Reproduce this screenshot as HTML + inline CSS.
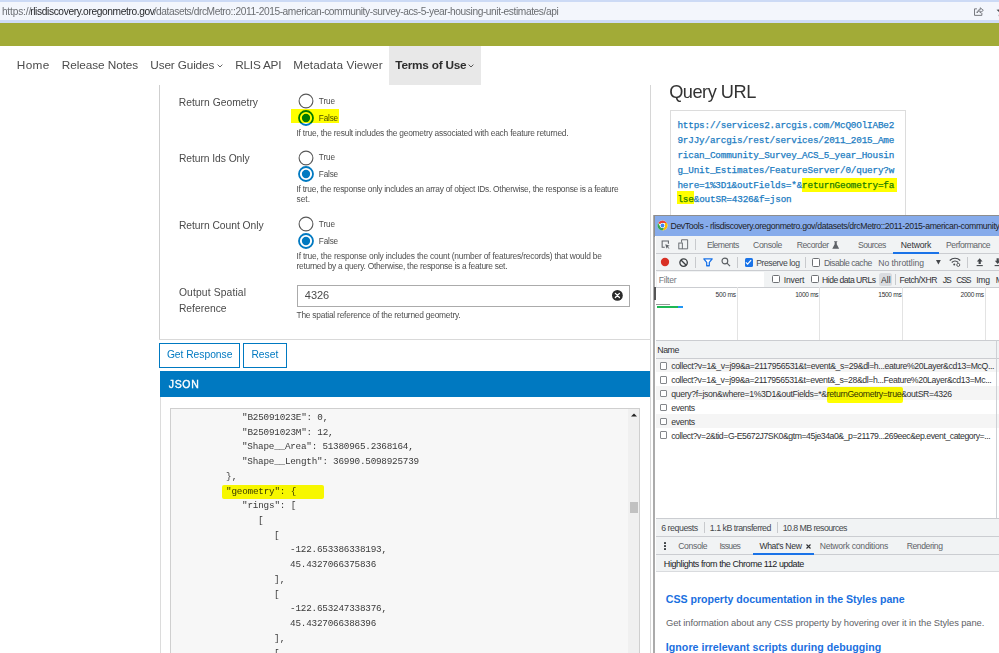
<!DOCTYPE html><html lang="en"><head><meta charset="utf-8"><title>RLIS Discovery API</title><style>

html,body{margin:0;padding:0;background:#fff;}
body{width:999px;height:653px;overflow:hidden;position:relative;font-family:"Liberation Sans",sans-serif;}
#root{position:absolute;left:0;top:0;width:999px;height:653px;overflow:hidden;}
#root div{position:absolute;box-sizing:border-box;}
#root svg{position:absolute;overflow:visible;}
.t{position:absolute;white-space:pre;line-height:1;}

</style></head><body><div id="root">
<div style="left:0px;top:0px;width:999px;height:23px;background:#f3f6fc;"></div>
<div style="left:0px;top:0px;width:999px;height:2px;background:#ccdaf5;"></div>
<div style="left:0px;top:20px;width:999px;height:3px;background:#cfdcf6;"></div>
<span class="t" style="left:1.89px;top:7.00px;font-size:10.2px;color:#6b6e72;letter-spacing:-0.169px;">https://</span>
<span class="t" style="left:30.19px;top:7.00px;font-size:10.2px;color:#26282b;letter-spacing:-0.370px;">rlisdiscovery.oregonmetro.gov</span>
<span class="t" style="left:153.69px;top:7.00px;font-size:10.2px;color:#6b6e72;letter-spacing:-0.415px;">/datasets/drcMetro::2011-2015-american-community-survey-acs-5-year-housing-unit-estimates/api</span>
<svg style="left:973.2px;top:5.8px" width="12" height="10.6" viewBox="0 0 14 13"><path d="M4.5 3.5H1.5V11.5H10.5V8.5" fill="none" stroke="#62656a" stroke-width="1.05"/><path d="M4.5 8.5C4.8 5.8 6.3 4.6 8.5 4.5V2.2L12.3 5.3L8.5 8.4V6.2C6.8 6.2 5.5 6.9 4.5 8.5Z" fill="none" stroke="#62656a" stroke-width="1.05" stroke-linejoin="round"/></svg>
<svg style="left:996px;top:5px" width="12" height="12" viewBox="0 0 12 12"><path d="M6 0.8L7.6 4.4L11.5 4.8L8.6 7.4L9.4 11.2L6 9.2L2.6 11.2L3.4 7.4L0.5 4.8L4.4 4.4Z" fill="#4a4d51"/></svg>
<div style="left:0px;top:23px;width:999px;height:22.7px;background:#a2ab37;"></div>
<div style="left:389px;top:46px;width:92px;height:38.7px;background:#e8e8e8;"></div>
<span class="t" style="left:16.79px;top:60.00px;font-size:11.8px;color:#4c4c4c;letter-spacing:0.362px;">Home</span>
<span class="t" style="left:61.79px;top:60.00px;font-size:11.8px;color:#4c4c4c;letter-spacing:-0.075px;">Release Notes</span>
<span class="t" style="left:150.29px;top:60.00px;font-size:11.8px;color:#4c4c4c;letter-spacing:-0.151px;">User Guides</span>
<span class="t" style="left:235.29px;top:60.00px;font-size:11.8px;color:#4c4c4c;letter-spacing:-0.245px;">RLIS API</span>
<span class="t" style="left:293.29px;top:60.00px;font-size:11.8px;color:#4c4c4c;letter-spacing:0.074px;">Metadata Viewer</span>
<span class="t" style="left:395.29px;top:60.00px;font-size:11.8px;color:#2e2e2e;font-weight:700;letter-spacing:-0.230px;">Terms of Use</span>
<svg style="left:216.5px;top:63.5px" width="6" height="4" viewBox="0 0 6 4"><path d="M0.6 0.6L3 3L5.4 0.6" fill="none" stroke="#555" stroke-width="0.9"/></svg>
<svg style="left:468px;top:63.5px" width="6" height="4" viewBox="0 0 6 4"><path d="M0.6 0.6L3 3L5.4 0.6" fill="none" stroke="#444" stroke-width="0.9"/></svg>
<div style="left:159px;top:85px;width:1px;height:255px;background:#cfcfcf;"></div>
<div style="left:650px;top:85px;width:1px;height:568px;background:#d6d6d6;"></div>
<div style="left:159px;top:339px;width:492px;height:1px;background:#d9d9d9;"></div>
<span class="t" style="left:178.78px;top:98.00px;font-size:10.3px;color:#4a4a4a;letter-spacing:0.017px;">Return Geometry</span>
<span class="t" style="left:178.88px;top:154.00px;font-size:10.3px;color:#4a4a4a;letter-spacing:-0.054px;">Return Ids Only</span>
<span class="t" style="left:178.88px;top:221.00px;font-size:10.3px;color:#4a4a4a;letter-spacing:-0.032px;">Return Count Only</span>
<span class="t" style="left:178.88px;top:288.00px;font-size:10.3px;color:#4a4a4a;letter-spacing:0.141px;">Output Spatial</span>
<span class="t" style="left:178.88px;top:304.00px;font-size:10.3px;color:#4a4a4a;letter-spacing:0.024px;">Reference</span>
<svg style="left:295.7px;top:91.2px" width="20" height="20" viewBox="0 0 20 20"><circle cx="10" cy="10" r="6.9" fill="#fff" stroke="#595959" stroke-width="1.1"/></svg>
<span class="t" style="left:318.81px;top:98.00px;font-size:8.2px;color:#4a4a4a;letter-spacing:-0.087px;">True</span>
<svg style="left:296px;top:108.10000000000001px" width="20" height="20" viewBox="0 0 20 20"><circle cx="10" cy="10" r="7.0" fill="#fff" stroke="#0079c1" stroke-width="1.8"/><circle cx="10" cy="10" r="4.15" fill="#0079c1"/></svg>
<span class="t" style="left:318.81px;top:115.00px;font-size:8.2px;color:#4a4a4a;letter-spacing:-0.169px;">False</span>
<svg style="left:295.7px;top:147.5px" width="20" height="20" viewBox="0 0 20 20"><circle cx="10" cy="10" r="6.9" fill="#fff" stroke="#595959" stroke-width="1.1"/></svg>
<span class="t" style="left:318.81px;top:154.00px;font-size:8.2px;color:#4a4a4a;letter-spacing:-0.087px;">True</span>
<svg style="left:296px;top:164.3px" width="20" height="20" viewBox="0 0 20 20"><circle cx="10" cy="10" r="7.0" fill="#fff" stroke="#0079c1" stroke-width="1.8"/><circle cx="10" cy="10" r="4.15" fill="#0079c1"/></svg>
<span class="t" style="left:318.81px;top:171.00px;font-size:8.2px;color:#4a4a4a;letter-spacing:-0.169px;">False</span>
<svg style="left:295.7px;top:214.3px" width="20" height="20" viewBox="0 0 20 20"><circle cx="10" cy="10" r="6.9" fill="#fff" stroke="#595959" stroke-width="1.1"/></svg>
<span class="t" style="left:318.81px;top:221.00px;font-size:8.2px;color:#4a4a4a;letter-spacing:-0.087px;">True</span>
<svg style="left:296px;top:231.20000000000002px" width="20" height="20" viewBox="0 0 20 20"><circle cx="10" cy="10" r="7.0" fill="#fff" stroke="#0079c1" stroke-width="1.8"/><circle cx="10" cy="10" r="4.15" fill="#0079c1"/></svg>
<span class="t" style="left:318.81px;top:238.00px;font-size:8.2px;color:#4a4a4a;letter-spacing:-0.169px;">False</span>
<div style="left:291px;top:109.2px;width:48.2px;height:13.6px;background:#ffff00;mix-blend-mode:multiply;"></div>
<span class="t" style="left:296.50px;top:129.00px;font-size:8.4px;color:#4f4f4f;letter-spacing:-0.215px;">If true, the result includes the geometry associated with each feature returned.</span>
<span class="t" style="left:296.50px;top:185.00px;font-size:8.4px;color:#4f4f4f;letter-spacing:-0.254px;">If true, the response only includes an array of object IDs. Otherwise, the response is a feature</span>
<span class="t" style="left:296.50px;top:195.00px;font-size:8.4px;color:#4f4f4f;letter-spacing:0.002px;">set.</span>
<span class="t" style="left:296.50px;top:252.00px;font-size:8.4px;color:#4f4f4f;letter-spacing:-0.198px;">If true, the response only includes the count (number of features/records) that would be</span>
<span class="t" style="left:296.50px;top:262.00px;font-size:8.4px;color:#4f4f4f;letter-spacing:-0.263px;">returned by a query. Otherwise, the response is a feature set.</span>
<span class="t" style="left:296.50px;top:311.00px;font-size:8.4px;color:#4f4f4f;letter-spacing:-0.224px;">The spatial reference of the returned geometry.</span>
<div style="left:296.5px;top:285px;width:333.5px;height:21.8px;background:#fff;border:1px solid #ababab;"></div>
<span class="t" style="left:304.84px;top:290.00px;font-size:11px;color:#4a4a4a;letter-spacing:-0.041px;">4326</span>
<svg style="left:612.3px;top:290px" width="10.8" height="10.8" viewBox="0 0 10 10"><circle cx="5" cy="5" r="5" fill="#2b2b2b"/><path d="M3.1 3.1L6.9 6.9M6.9 3.1L3.1 6.9" stroke="#fff" stroke-width="1.2" stroke-linecap="round"/></svg>
<div style="left:159.3px;top:342.5px;width:81px;height:25px;background:#fff;border:1px solid #0079c1;"></div>
<div style="left:243px;top:342.5px;width:43.8px;height:25px;background:#fff;border:1px solid #0079c1;"></div>
<span class="t" style="left:166.88px;top:350.00px;font-size:10.3px;color:#0079c1;letter-spacing:-0.029px;">Get Response</span>
<span class="t" style="left:251.38px;top:350.00px;font-size:10.3px;color:#0079c1;letter-spacing:0.016px;">Reset</span>
<div style="left:160px;top:371.2px;width:490px;height:26px;background:#0079c1;"></div>
<span class="t" style="left:168.87px;top:379.00px;font-size:10.5px;color:#fff;letter-spacing:0.624px;-webkit-text-stroke:0.35px #fff;">JSON</span>
<div style="left:160px;top:397px;width:1px;height:256px;background:#dcdcdc;"></div>
<div style="left:170px;top:408.2px;width:470px;height:250px;background:#f7f7f7;border:1px solid #cfcfcf;"></div>
<div style="left:628px;top:409.2px;width:11px;height:245px;background:#f0f0f0;"></div>
<div style="left:629.5px;top:502px;width:8.5px;height:10.8px;background:#c1c1c1;"></div>
<svg style="left:630.7px;top:412.5px" width="6" height="4" viewBox="0 0 6 4"><path d="M0 3.6L3 0.4L6 3.6Z" fill="#222"/></svg>
<span class="t" style="left:242.02px;top:413.00px;font-size:9.3px;color:#3a3a3a;font-family:'Liberation Mono', monospace;letter-spacing:-0.201px;">&quot;B25091023E&quot;: 0,</span>
<span class="t" style="left:242.02px;top:428.00px;font-size:9.3px;color:#3a3a3a;font-family:'Liberation Mono', monospace;letter-spacing:-0.203px;">&quot;B25091023M&quot;: 12,</span>
<span class="t" style="left:242.02px;top:442.00px;font-size:9.3px;color:#3a3a3a;font-family:'Liberation Mono', monospace;letter-spacing:-0.220px;">&quot;Shape__Area&quot;: 51380965.2368164,</span>
<span class="t" style="left:242.02px;top:457.00px;font-size:9.3px;color:#3a3a3a;font-family:'Liberation Mono', monospace;letter-spacing:-0.220px;">&quot;Shape__Length&quot;: 36990.5098925739</span>
<span class="t" style="left:226.00px;top:472.00px;font-size:9.3px;color:#3a3a3a;font-family:'Liberation Mono', monospace;letter-spacing:0.062px;">},</span>
<span class="t" style="left:226.00px;top:487.00px;font-size:9.3px;color:#3a3a3a;font-family:'Liberation Mono', monospace;letter-spacing:-0.192px;">&quot;geometry&quot;: {</span>
<span class="t" style="left:242.02px;top:501.00px;font-size:9.3px;color:#3a3a3a;font-family:'Liberation Mono', monospace;letter-spacing:-0.178px;">&quot;rings&quot;: [</span>
<span class="t" style="left:258.04px;top:516.00px;font-size:9.3px;color:#3a3a3a;font-family:'Liberation Mono', monospace;letter-spacing:0.362px;">[</span>
<span class="t" style="left:274.06px;top:531.00px;font-size:9.3px;color:#3a3a3a;font-family:'Liberation Mono', monospace;letter-spacing:0.362px;">[</span>
<span class="t" style="left:290.08px;top:545.00px;font-size:9.3px;color:#3a3a3a;font-family:'Liberation Mono', monospace;letter-spacing:-0.206px;">-122.653386338193,</span>
<span class="t" style="left:290.08px;top:560.00px;font-size:9.3px;color:#3a3a3a;font-family:'Liberation Mono', monospace;letter-spacing:-0.201px;">45.4327066375836</span>
<span class="t" style="left:274.06px;top:575.00px;font-size:9.3px;color:#3a3a3a;font-family:'Liberation Mono', monospace;letter-spacing:0.062px;">],</span>
<span class="t" style="left:274.06px;top:590.00px;font-size:9.3px;color:#3a3a3a;font-family:'Liberation Mono', monospace;letter-spacing:0.362px;">[</span>
<span class="t" style="left:290.08px;top:604.00px;font-size:9.3px;color:#3a3a3a;font-family:'Liberation Mono', monospace;letter-spacing:-0.206px;">-122.653247338376,</span>
<span class="t" style="left:290.08px;top:619.00px;font-size:9.3px;color:#3a3a3a;font-family:'Liberation Mono', monospace;letter-spacing:-0.201px;">45.4327066388396</span>
<span class="t" style="left:274.06px;top:634.00px;font-size:9.3px;color:#3a3a3a;font-family:'Liberation Mono', monospace;letter-spacing:0.062px;">],</span>
<span class="t" style="left:274.06px;top:649.00px;font-size:9.3px;color:#3a3a3a;font-family:'Liberation Mono', monospace;letter-spacing:0.362px;">[</span>
<div style="left:221.8px;top:484.8px;width:102.3px;height:14.2px;background:#ffff00;border-radius:2px;mix-blend-mode:multiply;"></div>
<span class="t" style="left:669.21px;top:83.00px;font-size:18.2px;color:#333;letter-spacing:-0.487px;">Query URL</span>
<div style="left:670px;top:109.6px;width:236.3px;height:120px;background:#fff;border:1px solid #dcdcdc;"></div>
<span class="t" style="left:677.44px;top:121.00px;font-size:9.3px;color:#1b7cc2;font-family:'Liberation Mono', monospace;letter-spacing:-0.161px;-webkit-text-stroke:0.25px #1b7cc2;">https://services2.arcgis.com/McQ0OlIABe2</span>
<span class="t" style="left:677.44px;top:136.00px;font-size:9.3px;color:#1b7cc2;font-family:'Liberation Mono', monospace;letter-spacing:-0.161px;-webkit-text-stroke:0.25px #1b7cc2;">9rJJy/arcgis/rest/services/2011_2015_Ame</span>
<span class="t" style="left:677.44px;top:151.00px;font-size:9.3px;color:#1b7cc2;font-family:'Liberation Mono', monospace;letter-spacing:-0.161px;-webkit-text-stroke:0.25px #1b7cc2;">rican_Community_Survey_ACS_5_year_Housin</span>
<span class="t" style="left:677.44px;top:166.00px;font-size:9.3px;color:#1b7cc2;font-family:'Liberation Mono', monospace;letter-spacing:-0.161px;-webkit-text-stroke:0.25px #1b7cc2;">g_Unit_Estimates/FeatureServer/0/query?w</span>
<span class="t" style="left:677.44px;top:181.00px;font-size:9.3px;color:#1b7cc2;font-family:'Liberation Mono', monospace;letter-spacing:-0.161px;-webkit-text-stroke:0.25px #1b7cc2;">here=1%3D1&amp;outFields=*&amp;returnGeometry=fa</span>
<span class="t" style="left:677.44px;top:195.00px;font-size:9.3px;color:#1b7cc2;font-family:'Liberation Mono', monospace;letter-spacing:-0.146px;-webkit-text-stroke:0.25px #1b7cc2;">lse&amp;outSR=4326&amp;f=json</span>
<div style="left:801.5px;top:177.8px;width:95.5px;height:14.2px;background:#ffff00;mix-blend-mode:multiply;"></div>
<div style="left:676.6px;top:191.3px;width:17.6px;height:12.5px;background:#ffff00;mix-blend-mode:multiply;"></div>
<div style="left:653.1px;top:214.6px;width:350px;height:442px;background:#ababab;"></div>
<div style="left:653.6px;top:214.8px;width:350px;height:22px;background:#8e8e8e;"></div>
<div style="left:655px;top:216px;width:345px;height:440px;background:#fff;"></div>
<div style="left:655px;top:215.6px;width:345px;height:20px;background:#86abeb;"></div>
<span class="t" style="left:670.48px;top:222.00px;font-size:8.7px;color:#1d1d1f;letter-spacing:-0.351px;">DevTools - rlisdiscovery.oregonmetro.gov/datasets/drcMetro::2011-2015-american-community-</span>
<svg style="left:656.8px;top:219.8px" width="11" height="11" viewBox="0 0 48 48"><circle cx="24" cy="24" r="22" fill="#fff"/><path d="M24 2A22 22 0 0 1 43.05 13H24A11 11 0 0 0 14.47 18.5L4.95 13A22 22 0 0 1 24 2Z" fill="#ea4335"/><path d="M43.05 13A22 22 0 0 1 24 46L33.53 29.5A11 11 0 0 0 33.53 18.5L33.53 13Z" fill="#fbbc04"/><path d="M24 46A22 22 0 0 1 4.95 13L14.47 29.5A11 11 0 0 0 33.53 29.5Z" fill="#34a853"/><circle cx="24" cy="24" r="10.5" fill="#fff"/><circle cx="24" cy="24" r="8.2" fill="#4285f4"/></svg>
<div style="left:655.8px;top:235.6px;width:345px;height:18.2px;background:#f1f3f4;border-bottom:1px solid #cbcdd1;"></div>
<div style="left:655.8px;top:253.8px;width:345px;height:17.2px;background:#f1f3f4;border-bottom:1px solid #cbcdd1;"></div>
<div style="left:655.8px;top:271px;width:345px;height:17px;background:#f1f3f4;border-bottom:1px solid #cbcdd1;"></div>
<span class="t" style="left:706.98px;top:241.00px;font-size:8.6px;color:#5f6368;letter-spacing:-0.512px;">Elements</span>
<span class="t" style="left:753.08px;top:241.00px;font-size:8.6px;color:#5f6368;letter-spacing:-0.386px;">Console</span>
<span class="t" style="left:796.68px;top:241.00px;font-size:8.6px;color:#5f6368;letter-spacing:-0.416px;">Recorder</span>
<span class="t" style="left:858.08px;top:241.00px;font-size:8.6px;color:#5f6368;letter-spacing:-0.543px;">Sources</span>
<span class="t" style="left:900.78px;top:241.00px;font-size:8.6px;color:#303134;letter-spacing:-0.157px;">Network</span>
<span class="t" style="left:946.08px;top:241.00px;font-size:8.6px;color:#5f6368;letter-spacing:-0.470px;">Performance</span>
<div style="left:893.4px;top:251.8px;width:45.4px;height:2px;background:#1a73e8;"></div>
<div style="left:695px;top:239px;width:1px;height:10.5px;background:#c8cacd;"></div>
<svg style="left:660.8px;top:240px" width="9.6" height="9.4" viewBox="0 0 18 18"><path d="M14 7V2H2V14H7" fill="none" stroke="#5f6368" stroke-width="2"/><path d="M8 8L16.5 11.2L12.8 12.8L16 16L15 17L11.8 13.8L10.4 17Z" fill="#5f6368"/></svg>
<svg style="left:678px;top:239px" width="10.2" height="10.6" viewBox="0 0 20 21"><path d="M7 7V1.5H19V19.5H9" fill="none" stroke="#5f6368" stroke-width="1.8"/><rect x="1.5" y="8" width="7" height="11.5" fill="none" stroke="#5f6368" stroke-width="1.8"/></svg>
<svg style="left:831.5px;top:241px" width="7.4" height="8" viewBox="0 0 14 15"><path d="M4 0.5H10V2H9V6L13.5 14.5H0.5L5 6V2H4Z" fill="#5f6368"/></svg>
<svg style="left:660px;top:256.9px" width="10" height="10" viewBox="0 0 10 10"><circle cx="5" cy="5" r="4.15" fill="#d93025"/></svg>
<svg style="left:678.9px;top:257.5px" width="9.2" height="9.2" viewBox="0 0 18 18"><circle cx="9" cy="9" r="7.3" fill="none" stroke="#3c4043" stroke-width="2.6"/><path d="M3.8 3.8L14.2 14.2" stroke="#3c4043" stroke-width="2.6"/></svg>
<div style="left:695px;top:257px;width:1px;height:11px;background:#c8cacd;"></div>
<svg style="left:702.5px;top:258.2px" width="10" height="8.6" viewBox="0 0 20 17"><path d="M1.6 1.8H18.4L12.6 8.6V15.4H7.4V8.6Z" fill="#fff" stroke="#1a73e8" stroke-width="2.6" stroke-linejoin="round"/></svg>
<svg style="left:720.6px;top:257.3px" width="9.6" height="9.8" viewBox="0 0 19 19"><circle cx="7.7" cy="7.7" r="5.7" fill="none" stroke="#5a5e62" stroke-width="2.2"/><path d="M11.8 11.8L17.8 17.8" stroke="#5a5e62" stroke-width="2.4"/></svg>
<div style="left:737px;top:257px;width:1px;height:11px;background:#c8cacd;"></div>
<div style="left:744.6px;top:258.2px;width:8.6px;height:8.6px;background:#1a73e8;border-radius:1.5px;"></div>
<svg style="left:745.4px;top:259.2px" width="7" height="6.6" viewBox="0 0 14 13"><path d="M1.8 6.8L5.2 10.2L12.2 2.2" fill="none" stroke="#fff" stroke-width="2.4"/></svg>
<span class="t" style="left:756.18px;top:259.00px;font-size:8.6px;color:#44474b;letter-spacing:-0.410px;">Preserve log</span>
<div style="left:804.8px;top:257px;width:1px;height:11px;background:#c8cacd;"></div>
<div style="left:811.8px;top:258.3px;width:8.2px;height:8.4px;background:#fff;border:1px solid #6d7074;border-radius:1.5px;"></div>
<span class="t" style="left:823.88px;top:259.00px;font-size:8.6px;color:#5f6368;letter-spacing:-0.466px;">Disable cache</span>
<span class="t" style="left:878.28px;top:259.00px;font-size:8.6px;color:#5f6368;letter-spacing:-0.047px;">No throttling</span>
<svg style="left:936.2px;top:259.8px" width="4.8" height="4.5" viewBox="0 0 10 9"><path d="M0 0H10L5 9Z" fill="#44474b"/></svg>
<svg style="left:949.3px;top:256.9px" width="12" height="10" viewBox="0 0 24 20"><path d="M1.5 7C7.5 1 16.5 1 22.5 7" fill="none" stroke="#44474b" stroke-width="2.2"/><path d="M5.5 11C9.2 7.4 14.8 7.4 18.5 11" fill="none" stroke="#44474b" stroke-width="2.2"/><circle cx="10.5" cy="15" r="2" fill="#44474b"/><circle cx="18.5" cy="15.8" r="3" fill="#fff" stroke="#44474b" stroke-width="1.8"/></svg>
<div style="left:967.4px;top:257px;width:1px;height:11px;background:#c8cacd;"></div>
<svg style="left:975.7px;top:258.3px" width="7.4" height="8.4" viewBox="0 0 15 19"><path d="M7.5 0.5L14 8H10V13.5H5V8H1Z" fill="#44474b"/><rect x="0.5" y="16" width="14" height="2.4" fill="#44474b"/></svg>
<svg style="left:994px;top:258.3px" width="7.4" height="8.4" viewBox="0 0 15 19"><path d="M7.5 13.5L14 6H10V0.5H5V6H1Z" fill="#44474b"/><rect x="0.5" y="16" width="14" height="2.4" fill="#44474b"/></svg>
<div style="left:656.5px;top:272px;width:107.5px;height:15px;background:#fff;"></div>
<span class="t" style="left:658.68px;top:276.00px;font-size:8.6px;color:#72777c;letter-spacing:-0.213px;">Filter</span>
<div style="left:772px;top:275.3px;width:8px;height:8px;background:#fff;border:1px solid #6d7074;border-radius:1.5px;"></div>
<span class="t" style="left:783.78px;top:276.00px;font-size:8.6px;color:#303134;letter-spacing:-0.195px;">Invert</span>
<div style="left:810.6px;top:275.3px;width:8px;height:8px;background:#fff;border:1px solid #6d7074;border-radius:1.5px;"></div>
<span class="t" style="left:822.08px;top:276.00px;font-size:8.6px;color:#303134;letter-spacing:-0.524px;">Hide data URLs</span>
<div style="left:879.2px;top:272.6px;width:12.8px;height:13.4px;background:#dadce0;border-radius:2.5px;"></div>
<span class="t" style="left:880.88px;top:276.00px;font-size:8.6px;color:#303134;letter-spacing:0.090px;">All</span>
<div style="left:895.4px;top:273.5px;width:1px;height:11.5px;background:#c8cacd;"></div>
<span class="t" style="left:899.48px;top:276.00px;font-size:8.6px;color:#303134;letter-spacing:-0.500px;">Fetch/XHR</span>
<span class="t" style="left:942.78px;top:276.00px;font-size:8.6px;color:#303134;letter-spacing:-1.150px;">JS</span>
<span class="t" style="left:956.28px;top:276.00px;font-size:8.6px;color:#303134;letter-spacing:-1.213px;">CSS</span>
<span class="t" style="left:976.18px;top:276.00px;font-size:8.6px;color:#303134;letter-spacing:-0.232px;">Img</span>
<span class="t" style="left:995.68px;top:276.00px;font-size:8.6px;color:#303134;">M</span>
<div style="left:737px;top:287.2px;width:1px;height:53px;background:#e3e3e3;"></div>
<div style="left:819px;top:287.2px;width:1px;height:53px;background:#e3e3e3;"></div>
<div style="left:902px;top:287.2px;width:1px;height:53px;background:#e3e3e3;"></div>
<div style="left:985px;top:287.2px;width:1px;height:53px;background:#e3e3e3;"></div>
<span class="t" style="left:715.40px;top:292.00px;font-size:6.6px;color:#303134;letter-spacing:-0.172px;">500 ms</span>
<span class="t" style="left:795.20px;top:292.00px;font-size:6.6px;color:#303134;letter-spacing:-0.301px;">1000 ms</span>
<span class="t" style="left:878.30px;top:292.00px;font-size:6.6px;color:#303134;letter-spacing:-0.315px;">1500 ms</span>
<span class="t" style="left:960.60px;top:292.00px;font-size:6.6px;color:#303134;letter-spacing:-0.315px;">2000 ms</span>
<div style="left:654px;top:287.2px;width:1.6px;height:12.5px;background:#555;"></div>
<div style="left:656.3px;top:303.8px;width:13.5px;height:1px;background:#9a9a9a;"></div>
<div style="left:657.2px;top:306px;width:21.2px;height:1.5px;background:#1eb854;"></div>
<div style="left:678.3px;top:306px;width:5px;height:1.5px;background:#2196f3;"></div>
<div style="left:655.8px;top:340.2px;width:345px;height:18.5px;background:#f1f3f4;border-top:1px solid #cbcdd1;border-bottom:1px solid #cbcdd1;"></div>
<span class="t" style="left:657.27px;top:346.00px;font-size:8.8px;color:#303134;letter-spacing:-0.478px;">Name</span>
<div style="left:655.8px;top:358.7px;width:345px;height:13.8px;background:#f5f5f5;"></div>
<div style="left:660.3px;top:362.3px;width:7px;height:7.5px;background:#fff;border:1px solid #84878b;border-radius:1px;"></div>
<span class="t" style="left:671.18px;top:362.00px;font-size:8.7px;color:#303134;letter-spacing:-0.365px;">collect?v=1&amp;_v=j99&amp;a=2117956531&amp;t=event&amp;_s=29&amp;dl=h...eature%20Layer&amp;cd13=McQ...</span>
<div style="left:660.3px;top:376.1px;width:7px;height:7.5px;background:#fff;border:1px solid #84878b;border-radius:1px;"></div>
<span class="t" style="left:671.18px;top:376.00px;font-size:8.7px;color:#303134;letter-spacing:-0.382px;">collect?v=1&amp;_v=j99&amp;a=2117956531&amp;t=event&amp;_s=28&amp;dl=h...Feature%20Layer&amp;cd13=Mc...</span>
<div style="left:655.8px;top:386.3px;width:345px;height:13.8px;background:#f5f5f5;"></div>
<div style="left:660.3px;top:389.90000000000003px;width:7px;height:7.5px;background:#fff;border:1px solid #84878b;border-radius:1px;"></div>
<span class="t" style="left:671.18px;top:390.00px;font-size:8.7px;color:#303134;letter-spacing:-0.343px;">query?f=json&amp;where=1%3D1&amp;outFields=*&amp;returnGeometry=true&amp;outSR=4326</span>
<div style="left:660.3px;top:403.70000000000005px;width:7px;height:7.5px;background:#fff;border:1px solid #84878b;border-radius:1px;"></div>
<span class="t" style="left:671.18px;top:404.00px;font-size:8.7px;color:#303134;letter-spacing:-0.311px;">events</span>
<div style="left:655.8px;top:413.9px;width:345px;height:13.8px;background:#f5f5f5;"></div>
<div style="left:660.3px;top:417.5px;width:7px;height:7.5px;background:#fff;border:1px solid #84878b;border-radius:1px;"></div>
<span class="t" style="left:671.18px;top:418.00px;font-size:8.7px;color:#303134;letter-spacing:-0.311px;">events</span>
<div style="left:660.3px;top:431.3px;width:7px;height:7.5px;background:#fff;border:1px solid #84878b;border-radius:1px;"></div>
<span class="t" style="left:671.18px;top:432.00px;font-size:8.7px;color:#303134;letter-spacing:-0.440px;">collect?v=2&amp;tid=G-E5672J7SK0&amp;gtm=45je34a0&amp;_p=21179...269eec&amp;ep.event_category=...</span>
<div style="left:826.5px;top:387px;width:76.2px;height:15.6px;background:#ffff00;border-radius:2px;mix-blend-mode:multiply;"></div>
<div style="left:996px;top:340.2px;width:1px;height:178.4px;background:#cdd0d5;"></div>
<div style="left:655.8px;top:518.4px;width:345px;height:18.4px;background:#f1f3f4;border-top:1px solid #cbcdd1;border-bottom:1px solid #cbcdd1;"></div>
<span class="t" style="left:661.17px;top:524.00px;font-size:8.8px;color:#44474b;letter-spacing:-0.452px;">6 requests</span>
<div style="left:703.6px;top:522px;width:1px;height:11px;background:#c8cacd;"></div>
<span class="t" style="left:709.87px;top:524.00px;font-size:8.8px;color:#44474b;letter-spacing:-0.493px;">1.1 kB transferred</span>
<div style="left:777.1px;top:522px;width:1px;height:11px;background:#c8cacd;"></div>
<span class="t" style="left:782.77px;top:524.00px;font-size:8.8px;color:#44474b;letter-spacing:-0.570px;">10.8 MB resources</span>
<div style="left:655.8px;top:536.8px;width:345px;height:17.9px;background:#f1f3f4;border-bottom:1px solid #cbcdd1;"></div>
<div style="left:664.2px;top:541.8px;width:2px;height:2px;background:#3c4043;border-radius:30%;"></div>
<div style="left:664.2px;top:545.0999999999999px;width:2px;height:2px;background:#3c4043;border-radius:30%;"></div>
<div style="left:664.2px;top:548.4px;width:2px;height:2px;background:#3c4043;border-radius:30%;"></div>
<span class="t" style="left:678.28px;top:542.00px;font-size:8.6px;color:#5f6368;letter-spacing:-0.357px;">Console</span>
<span class="t" style="left:719.38px;top:542.00px;font-size:8.6px;color:#5f6368;letter-spacing:-0.669px;">Issues</span>
<span class="t" style="left:759.38px;top:542.00px;font-size:8.6px;color:#303134;letter-spacing:-0.345px;">What&#x27;s New</span>
<svg style="left:805.6px;top:544px" width="5" height="5" viewBox="0 0 10 10"><path d="M1 1L9 9M9 1L1 9" stroke="#303134" stroke-width="2.2"/></svg>
<div style="left:753.2px;top:552.8px;width:60.4px;height:2px;background:#1a73e8;"></div>
<span class="t" style="left:819.68px;top:542.00px;font-size:8.6px;color:#5f6368;letter-spacing:-0.232px;">Network conditions</span>
<span class="t" style="left:906.68px;top:542.00px;font-size:8.6px;color:#5f6368;letter-spacing:-0.414px;">Rendering</span>
<div style="left:655.8px;top:554.7px;width:345px;height:17.8px;background:#f1f3f4;border-bottom:1px solid #d9dbde;"></div>
<span class="t" style="left:663.86px;top:560.00px;font-size:9px;color:#202124;letter-spacing:-0.447px;">Highlights from the Chrome 112 update</span>
<span class="t" style="left:665.86px;top:594.00px;font-size:10.6px;color:#1a6fe0;font-weight:700;letter-spacing:-0.018px;">CSS property documentation in the Styles pane</span>
<span class="t" style="left:665.94px;top:618.00px;font-size:9.4px;color:#5f6368;letter-spacing:-0.095px;">Get information about any CSS property by hovering over it in the Styles pane.</span>
<span class="t" style="left:665.86px;top:642.00px;font-size:10.6px;color:#1a6fe0;font-weight:700;letter-spacing:0.040px;">Ignore irrelevant scripts during debugging</span>
</div></body></html>
